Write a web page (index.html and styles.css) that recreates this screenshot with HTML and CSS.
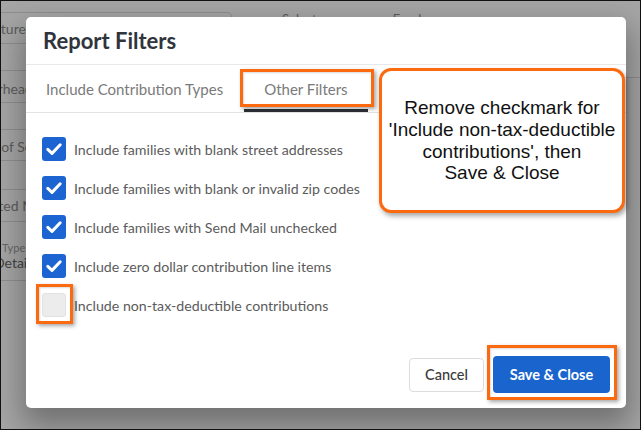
FILE: index.html
```html
<!DOCTYPE html>
<html>
<head>
<meta charset="utf-8">
<link rel="stylesheet" href="styles.css">
</head>
<body>
<div class="screen">
  <div class="page">
    <div class="bg-left">
      <div class="bg-field bg-f1"><span class="bg-t t1">Signature</span></div>
      <div class="bg-field bg-f2"><span class="bg-t t2">Overhead</span></div>
      <div class="bg-field bg-f3"><span class="bg-t t3">Date of Service</span></div>
      <div class="bg-field bg-f4"><span class="bg-t t4">Selected Name</span></div>
      <div class="bg-field bg-f5"><span class="bg-small">Type</span><span class="bg-t t5">Details</span></div>
    </div>
    <div class="bg-right">
      <div class="bg-label">Select one or more Funds</div>
      <div class="bg-rline"></div>
    </div>
  </div>

  <div class="modal">
    <div class="modal-head">
      <h1 class="modal-title">Report Filters</h1>
    </div>
    <div class="tabs">
      <div class="tab">Include Contribution Types</div>
      <div class="tab tab-active">Other Filters</div>
    </div>
    <div class="modal-body">
      <label class="opt"><span class="cb cb-on"><svg viewBox="0 0 24 24" width="24" height="24"><path d="M5.8 12.4 L10 16.4 L18.2 7.8" fill="none" stroke="#fff" stroke-width="3" stroke-linecap="round" stroke-linejoin="round"/></svg></span><span class="opt-text">Include families with blank street addresses</span></label>
      <label class="opt"><span class="cb cb-on"><svg viewBox="0 0 24 24" width="24" height="24"><path d="M5.8 12.4 L10 16.4 L18.2 7.8" fill="none" stroke="#fff" stroke-width="3" stroke-linecap="round" stroke-linejoin="round"/></svg></span><span class="opt-text">Include families with blank or invalid zip codes</span></label>
      <label class="opt"><span class="cb cb-on"><svg viewBox="0 0 24 24" width="24" height="24"><path d="M5.8 12.4 L10 16.4 L18.2 7.8" fill="none" stroke="#fff" stroke-width="3" stroke-linecap="round" stroke-linejoin="round"/></svg></span><span class="opt-text">Include families with Send Mail unchecked</span></label>
      <label class="opt"><span class="cb cb-on"><svg viewBox="0 0 24 24" width="24" height="24"><path d="M5.8 12.4 L10 16.4 L18.2 7.8" fill="none" stroke="#fff" stroke-width="3" stroke-linecap="round" stroke-linejoin="round"/></svg></span><span class="opt-text">Include zero dollar contribution line items</span></label>
      <label class="opt"><span class="cb cb-off"></span><span class="opt-text">Include non-tax-deductible contributions</span></label>
    </div>
    <div class="modal-foot">
      <button class="btn btn-cancel">Cancel</button>
      <button class="btn btn-save">Save &amp; Close</button>
    </div>
  </div>

  <div class="hl hl-tab"></div>
  <div class="hl hl-cb"></div>
  <div class="hl hl-save"></div>

  <div class="callout">
    <p class="callout-text">Remove checkmark for<br>'Include non-tax-deductible<br>contributions', then<br>Save &amp; Close</p>
  </div>
</div>
</body>
</html>
```
FILE: styles.css
```css
* { box-sizing: border-box; }
html, body { margin: 0; padding: 0; }
body { font-family: Lato, "Open Sans", sans-serif; }

.screen {
  position: relative;
  width: 641px;
  height: 430px;
  border: 1px solid #111;
  background: #a5a5a5;
  overflow: hidden;
}

/* dimmed page behind the modal */
.page {
  display: flex;
  gap: 50px;
  color: #5c5c5c;
  font-size: 14px;
}
.bg-left {
  width: 232px;
  margin-left: -1px;
  padding-top: 11px;
  display: flex;
  flex-direction: column;
}
.bg-field {
  display: flex;
  flex-direction: column;
  justify-content: center;
  border-top: 1px solid #8e8e8e;
  border-bottom: 1px solid #8e8e8e;
  white-space: nowrap;
  overflow: hidden;
}
.bg-f1 { height: 32px; border-right: 1px solid #8e8e8e; border-radius: 0 5px 5px 0; margin-bottom: 26px; }
.bg-f2 { height: 33px; margin-bottom: 26px; padding-top: 3px; }
.bg-f3 { height: 32px; margin-bottom: 28px; padding-top: 3px; }
.bg-f4 { height: 32px; border-bottom: none; }
.bg-f5 { height: 60px; padding-top: 10px; }
.bg-t { display: block; }
.t1 { margin-left: -32px; }
.t2 { margin-left: -28px; }
.t3 { margin-left: -32px; }
.t4 { margin-left: -34px; }
.t5 { margin-left: -6px; font-size: 14px; color: #444; }
.bg-small { font-size: 11px; margin-left: 2px; color: #666; }

.bg-right { flex: 1; padding-top: 10px; }
.bg-label { font-size: 13px; line-height: 16px; }
.bg-rline { margin-top: 50px; border-top: 1px solid #8e8e8e; }

/* modal */
.modal {
  position: absolute;
  left: 25px;
  top: 16px;
  width: 600px;
  height: 391px;
  background: #fff;
  border-radius: 5px;
  box-shadow: 0 14px 30px 4px rgba(0,0,0,0.32);
  display: flex;
  flex-direction: column;
}
.modal-head {
  height: 48px;
  padding: 0 17px;
  display: flex;
  align-items: center;
  border-bottom: 1px solid #e8e8e8;
}
.modal-title {
  margin: 0;
  font-size: 22px;
  font-weight: 700;
  color: #2f353b;
}
.tabs {
  display: flex;
  height: 48px;
  border-bottom: 1px solid #e3e3e3;
}
.tab {
  padding: 0 20px;
  display: flex;
  align-items: center;
  font-size: 15px;
  color: #7a7a7a;
}
.tab-active {
  margin-left: 1px;
  border-bottom: 3px solid #2c3137;
  padding-top: 3px;
}
.modal-body {
  flex: 1;
  padding: 24px 16px 0;
  display: flex;
  flex-direction: column;
  gap: 15px;
}
.opt {
  display: flex;
  align-items: center;
  gap: 8px;
  font-size: 14.2px;
  color: #5b5b5b;
}
.cb {
  width: 24px;
  height: 24px;
  border-radius: 3px;
  display: flex;
  flex: none;
}
.cb-on { background: #1c64d2; }
.cb-off { background: #ececec; border: 1px solid #e2e2e2; }

.modal-foot {
  display: flex;
  justify-content: flex-end;
  align-items: center;
  gap: 9px;
  padding: 0 16px 15px;
}
.btn {
  font-family: Lato, "Open Sans", sans-serif;
  font-size: 14.5px;
  border-radius: 4px;
  cursor: pointer;
}
.btn-cancel {
  width: 75px;
  height: 34px;
  background: #fff;
  border: 1px solid #dcdcdc;
  color: #3a3a3a;
  font-weight: 500;
}
.btn-save {
  width: 117px;
  height: 37px;
  background: #1a64cd;
  border: none;
  color: #fff;
  font-weight: 700;
}

/* annotation highlights */
.hl {
  position: absolute;
  border: 3px solid #fb6a0e;
  box-shadow: 2px 2px 4px rgba(0,0,0,0.35), inset 1px 1px 2px rgba(0,0,0,0.15);
}
.hl-tab { left: 239px; top: 68px; width: 134px; height: 38px; }
.hl-cb { left: 35px; top: 283px; width: 37px; height: 40px; }
.hl-save { left: 486px; top: 344px; width: 130px; height: 55px; }

.callout {
  position: absolute;
  left: 378px;
  top: 67px;
  width: 246px;
  height: 145px;
  border: 3px solid #fb6a0e;
  border-radius: 12px;
  background: #fff;
  box-shadow: 2px 3px 5px rgba(0,0,0,0.35);
  display: flex;
  align-items: center;
  justify-content: center;
}
.callout-text {
  margin: 0;
  text-align: center;
  font-family: "Liberation Sans", Arial, sans-serif;
  font-size: 19px;
  line-height: 21.7px;
  color: #111;
}
```
